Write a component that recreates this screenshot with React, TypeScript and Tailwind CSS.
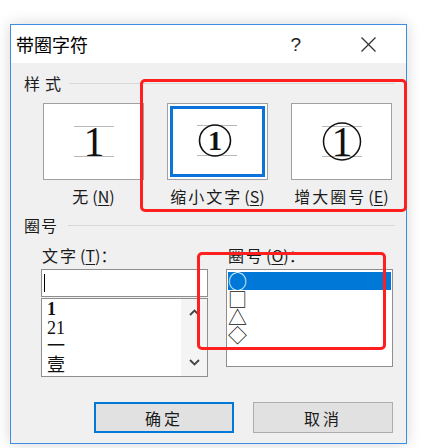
import React from 'react';

const Acc = ({ k }: { k: string }) => (
  <span className="ml-[2px] tracking-normal">
    (<span className="underline underline-offset-2">{k}</span>)
  </span>
);

const Guides = () => (
  <>
    <line x1="30" y1="22.5" x2="70" y2="22.5" stroke="#b8b8b8" strokeWidth="1" />
    <line x1="30" y1="52.5" x2="70" y2="52.5" stroke="#b8b8b8" strokeWidth="1" />
  </>
);

const StyleBox = ({ kind, selected }: { kind: 'none' | 'shrink' | 'grow'; selected?: boolean }) => (
  <div
    className={
      'w-[101px] h-[77px] bg-white border border-[#a0a0a0] ' +
      (selected ? 'p-[2px]' : '')
    }
  >
    <div className={selected ? 'w-full h-full border-[3px] border-[#0a74da] overflow-hidden' : 'w-full h-full'}>
      <svg
        width="99"
        height="75"
        viewBox="0 0 99 75"
        className={selected ? '-ml-[6px] -mt-[6px]' : ''}
      >
        <Guides />
        {kind === 'none' && (
          <text x="50" y="52" textAnchor="middle" fontFamily="Liberation Serif" fontSize="42" fill="#111">
            1
          </text>
        )}
        {kind === 'shrink' && (
          <>
            <circle cx="48" cy="37.5" r="15.5" fill="none" stroke="#111" strokeWidth="1.6" />
            <text x="48" y="47" textAnchor="middle" fontFamily="Liberation Serif" fontSize="28" fontWeight="bold" fill="#111">
              1
            </text>
          </>
        )}
        {kind === 'grow' && (
          <>
            <circle cx="50" cy="37.5" r="18.5" fill="none" stroke="#111" strokeWidth="1.5" />
            <text x="50" y="52" textAnchor="middle" fontFamily="Liberation Serif" fontSize="42" fill="#111">
              1
            </text>
          </>
        )}
      </svg>
    </div>
  </div>
);

const App = () => {
  const textItems = ['1', '21', '一', '壹'];
  const shapes = ['○', '□', '△', '◇'];

  return (
    <div className="relative w-[436px] h-[448px] bg-white overflow-hidden font-['Noto_Sans_CJK_SC','Noto_Sans',sans-serif] text-[#1b1b1b]">
      <div className="ml-[10px] mt-[24px] w-[397px] h-[420px] border border-[#3f8de0] shadow-[0_0_14px_rgba(0,0,0,0.16)] flex flex-col">
        {/* title bar */}
        <div className="h-[38px] bg-white flex items-center pl-[5px] pr-[30px] shrink-0">
          <span className="text-[18px] leading-none text-black">带圈字符</span>
          <span className="ml-auto font-['Liberation_Sans',sans-serif] text-[19px] leading-none text-[#222]">?</span>
          <svg width="15" height="15" viewBox="0 0 15 15" className="ml-[60px]">
            <line x1="0.5" y1="0.5" x2="14.5" y2="14.5" stroke="#333" strokeWidth="1.2" />
            <line x1="14.5" y1="0.5" x2="0.5" y2="14.5" stroke="#333" strokeWidth="1.2" />
          </svg>
        </div>

        {/* body */}
        <div className="flex-1 bg-[#f0f0f0] pt-[10px]">
          <div className="flex items-center h-[20px] pl-[13px] pr-[11px]">
            <span className="text-[16px] leading-[20px] tracking-[5px]">样式</span>
            <div className="flex-1 h-px bg-[#d8d8d8] ml-[3px]" />
          </div>

          <div className="flex gap-[23px] pl-[32px] mt-[10px]">
            {[
              { kind: 'none' as const, label: '无', key: 'N' },
              { kind: 'shrink' as const, label: '缩小文字', key: 'S', selected: true },
              { kind: 'grow' as const, label: '增大圈号', key: 'E' },
            ].map((b) => (
              <div key={b.key} className="flex flex-col items-center w-[101px]">
                <StyleBox kind={b.kind} selected={b.selected} />
                <div className="mt-[6px] text-[16px] leading-[20px] tracking-[2px] whitespace-nowrap">
                  {b.label}
                  <Acc k={b.key} />
                </div>
              </div>
            ))}
          </div>

          <div className="flex items-center h-[20px] pl-[13px] pr-[11px] mt-[9px]">
            <span className="text-[16px] leading-[20px] tracking-[1px]">圈号</span>
            <div className="flex-1 h-px bg-[#d8d8d8] ml-[10px]" />
          </div>

          <div className="flex gap-[18px] pl-[30px] mt-[10px]">
            {/* text column */}
            <div className="w-[167px] flex flex-col">
              <div className="h-[20px] pl-[1px] text-[16px] leading-[20px] tracking-[2px] whitespace-nowrap">
                文字<Acc k="T" />：
              </div>
              <div className="mt-[4px] h-[28px] bg-white border border-[#8e8e8e] flex items-center pl-[2px]">
                <div className="w-px h-[18px] bg-black" />
              </div>
              <div className="mt-[1px] h-[79px] bg-white border border-[#8e8e8e] flex">
                <div className="flex-1 pl-[5px] pt-[1px] font-['Liberation_Serif','Noto_Sans_CJK_SC',serif] text-[18px] leading-[18.5px] text-[#111]">
                  {textItems.map((t, i) => (
                    <div key={t} className={i === 0 ? 'font-bold' : ''}>
                      {t}
                    </div>
                  ))}
                </div>
                <div className="w-[26px] bg-[#f4f4f4] flex flex-col items-center justify-between py-[10px]">
                  <svg width="11" height="7" viewBox="0 0 11 7">
                    <polyline points="1,6 5.5,1.5 10,6" fill="none" stroke="#444" strokeWidth="1.8" />
                  </svg>
                  <svg width="11" height="7" viewBox="0 0 11 7">
                    <polyline points="1,1 5.5,5.5 10,1" fill="none" stroke="#444" strokeWidth="1.8" />
                  </svg>
                </div>
              </div>
            </div>

            {/* enclosure column */}
            <div className="w-[167px] flex flex-col">
              <div className="h-[20px] pl-[2px] text-[16px] leading-[20px] tracking-[2px] whitespace-nowrap">
                圈号<Acc k="O" />：
              </div>
              <div className="mt-[4px] h-[98px] bg-white border border-[#8e8e8e] p-px pt-[2px]">
                {shapes.map((s, i) => (
                  <div
                    key={s}
                    className={
                      i === 0
                        ? 'h-[18px] flex items-center text-[19px] leading-[18px] bg-[#0078d7] text-white'
                        : 'h-[18px] flex items-center text-[19px] leading-[18px] text-[#111]'
                    }
                  >
                    {s}
                  </div>
                ))}
              </div>
            </div>
          </div>

          <div className="flex gap-[19px] pl-[83px] mt-[25px]">
            <button className="w-[140px] h-[31px] bg-[#e1e1e1] border-2 border-[#0078d7] text-[16px] tracking-[3px]">
              确定
            </button>
            <button className="w-[140px] h-[31px] bg-[#e1e1e1] border border-[#adadad] text-[16px] tracking-[3px]">
              取消
            </button>
          </div>
        </div>
      </div>

      {/* red annotation frames */}
      <div className="absolute left-[140px] top-[79px] w-[267px] h-[133px] border-[3px] border-[#ff1f1f] rounded-[5px]" />
      <div className="absolute left-[197px] top-[252px] w-[189px] h-[98px] border-[3px] border-[#ff1f1f] rounded-[5px]" />
    </div>
  );
};

export default App;
